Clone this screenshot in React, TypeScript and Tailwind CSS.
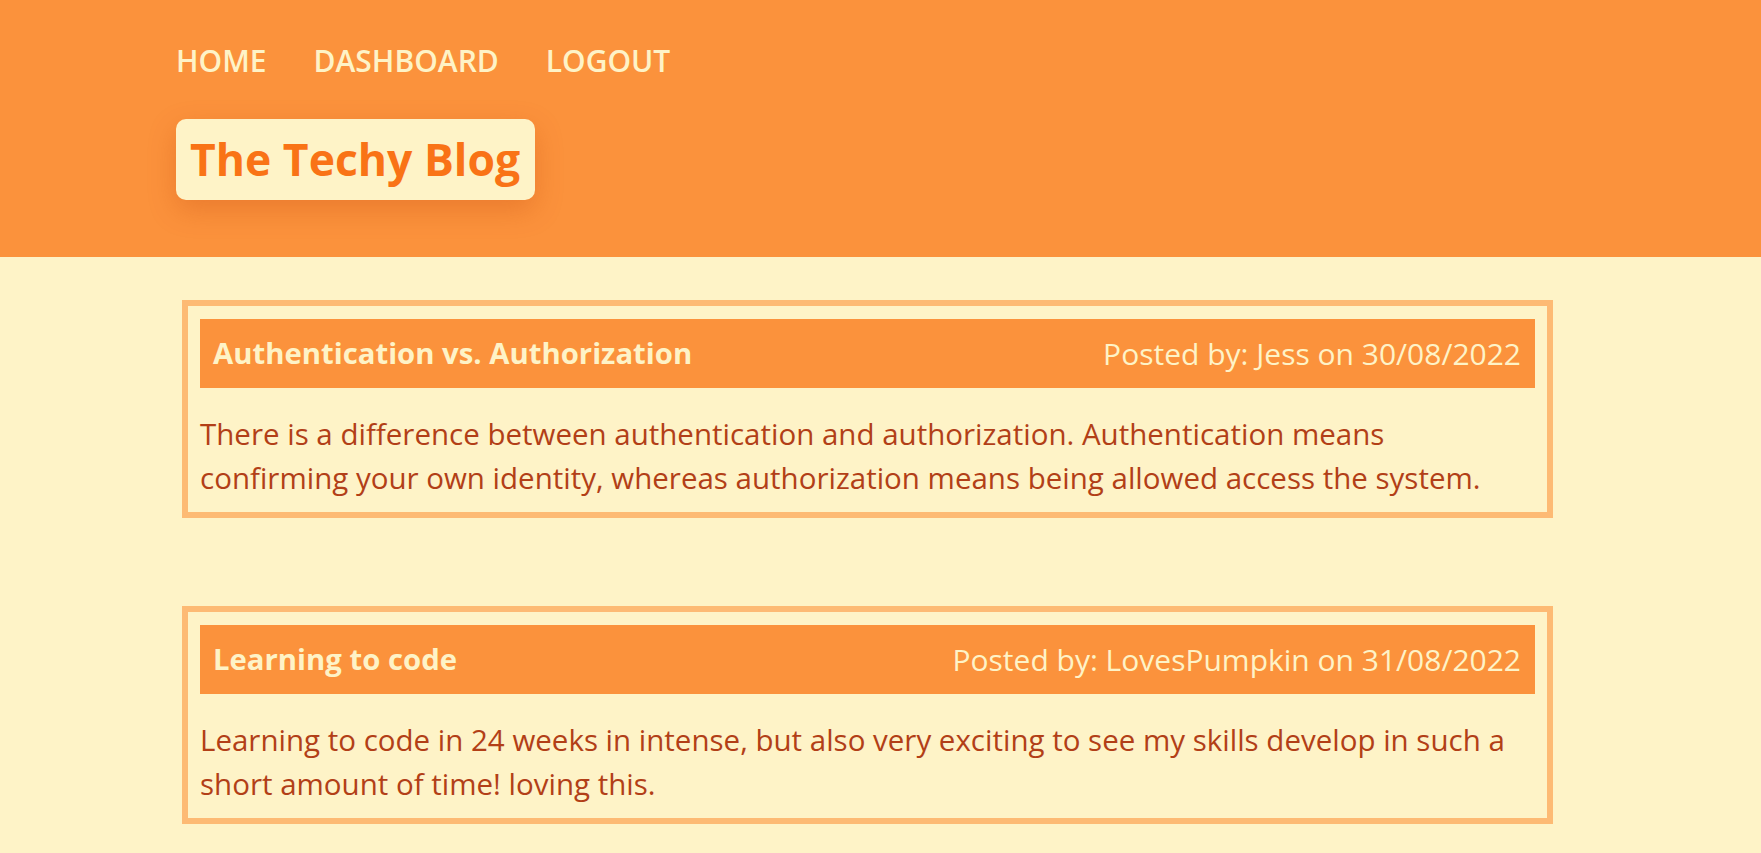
import React from 'react';

type Post = {
  title: string;
  author: string;
  date: string;
  body: string;
};

const posts: Post[] = [
  {
    title: 'Authentication vs. Authorization',
    author: 'Jess',
    date: '30/08/2022',
    body: 'There is a difference between authentication and authorization. Authentication means confirming your own identity, whereas authorization means being allowed access the system.',
  },
  {
    title: 'Learning to code',
    author: 'LovesPumpkin',
    date: '31/08/2022',
    body: 'Learning to code in 24 weeks in intense, but also very exciting to see my skills develop in such a short amount of time! loving this.',
  },
];

function PostCard({ post }: { post: Post }) {
  return (
    <article className="w-[1371px] border-[6px] border-[#fdba74] pt-[13px] px-[12px] pb-[12px]">
      {/* Post header bar */}
      <div className="flex h-[69px] items-center justify-between bg-[#fb923c] pl-[13px] pr-[14px] text-[#fef3c7]">
        <h2 className="text-[29.3px] font-bold">{post.title}</h2>
        <span className="text-[30px]">
          Posted by: {post.author} on {post.date}
        </span>
      </div>
      {/* Post body */}
      <p className="mt-[24px] text-[29.5px] leading-[44px] text-[#b23f17]">{post.body}</p>
    </article>
  );
}

export default function App() {
  return (
    <div
      className="min-h-screen bg-[#fef3c7]"
      style={{ fontFamily: '"Open Sans", "Noto Sans", sans-serif' }}
    >
      <header className="h-[257px] bg-[#fb923c] pl-[176px] pt-[39px]">
        <nav className="flex gap-[47px] text-[30px] font-semibold uppercase leading-[43px] text-[#fef3c7]">
          <a href="#">Home</a>
          <a href="#">Dashboard</a>
          <a href="#">Logout</a>
        </nav>
        <div className="mt-[37px] inline-flex h-[81px] items-center rounded-[10px] bg-[#fef3c7] pl-[14px] pr-[15px] shadow-[0_10px_28px_rgba(194,65,12,0.28)]">
          <h1 className="text-[44.5px] font-bold leading-none text-[#f97316]">The Techy Blog</h1>
        </div>
      </header>

      <main className="flex flex-col gap-[88px] pl-[182px] pt-[43px]">
        {posts.map((post) => (
          <PostCard key={post.title} post={post} />
        ))}
      </main>
    </div>
  );
}
